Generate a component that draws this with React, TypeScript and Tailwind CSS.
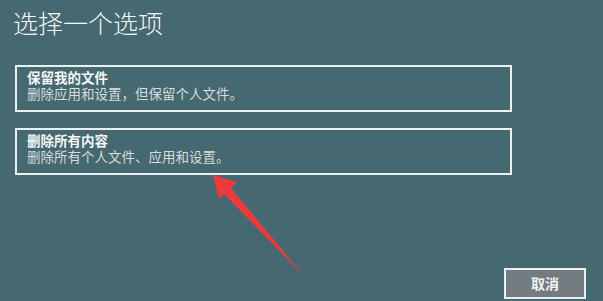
import React from "react";

const cjk = { fontFamily: '"Noto Sans CJK SC", "Noto Sans", sans-serif' };
const small = { fontFamily: '"Liberation Sans", "Noto Sans CJK SC", sans-serif' };

function Option({ title, desc }: { title: string; desc: string }) {
  return (
    <div className="w-[497px] border-2 border-[#e9f0f0] pl-[10px] pt-[4px] pb-[7px]" style={small}>
      <div className="text-[13.5px] leading-[16px] font-bold text-[#f4f7f7]">{title}</div>
      <div className="text-[13.5px] leading-[16px] text-[#d3dede]">{desc}</div>
    </div>
  );
}

function Arrow() {
  return (
    <svg className="absolute left-0 top-0 pointer-events-none" width="603" height="301" viewBox="0 0 603 301">
      <polygon
        points="213,175 237,182 231,188 305,277 224,194 219,199"
        fill="#ec3b3d"
      />
    </svg>
  );
}

export default function App() {
  return (
    <div className="relative flex flex-col w-[603px] h-[301px] bg-[#466870] overflow-hidden" style={cjk}>
      <h1 className="pl-[13px] pt-[6px] text-[25px] leading-[32px] font-light text-[#f2f6f6]">
        选择一个选项
      </h1>
      <div className="flex flex-col gap-[16px] pl-[15px] mt-[27px]">
        <Option title="保留我的文件" desc="删除应用和设置，但保留个人文件。" />
        <Option title="删除所有内容" desc="删除所有个人文件、应用和设置。" />
      </div>
      <div className="flex-1 flex items-end justify-end pr-[17px] pb-[2px]">
        <button className="w-[82px] h-[31px] border-2 border-[#e9f0f0] bg-[#737c80] text-[14px] font-bold text-[#eef2f2]">
          取消
        </button>
      </div>
      <Arrow />
    </div>
  );
}
